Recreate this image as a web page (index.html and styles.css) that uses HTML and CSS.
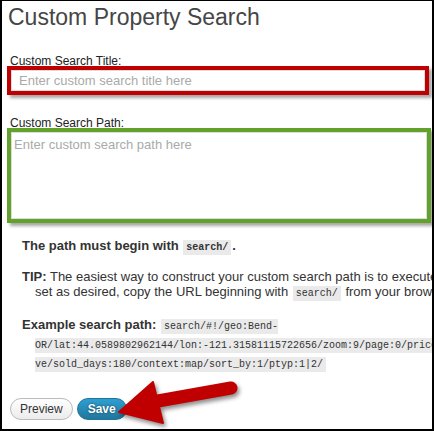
FILE: index.html
```html
<!DOCTYPE html>
<html>
<head>
<meta charset="utf-8">
<link rel="stylesheet" href="styles.css">
</head>
<body>
<div class="frame">
  <h2 class="title">Custom Property Search</h2>
  <label class="label label-title">Custom Search Title:</label>
  <div class="box box-red">
    <input class="field" type="text" placeholder="Enter custom search title here">
  </div>
  <label class="label label-path">Custom Search Path:</label>
  <div class="box box-green">
    <textarea class="area" placeholder="Enter custom search path here"></textarea>
  </div>
  <div class="notes">
    <p class="note note-first"><strong>The path must begin with <code>search/</code>.</strong></p>
    <p class="note note-tip"><strong>TIP:</strong> The easiest way to construct your custom search path is to execute a search with all options<br>set as desired, copy the URL beginning with <code>search/</code> from your browser and paste it here.</p>
    <p class="note note-example"><strong>Example search path:</strong> <code>search/#!/geo:Bend-<br>OR/lat:44.0589802962144/lon:-121.31581115722656/zoom:9/page:0/price_min:0/status:acti<br>ve/sold_days:180/context:map/sort_by:1/ptyp:1|2/</code></p>
  </div>
  <div class="actions">
    <button class="btn btn-preview" type="button">Preview</button>
    <button class="btn btn-save" type="button">Save</button>
  </div>
  <svg class="arrow" width="434" height="431" viewBox="0 0 434 431">
    <line x1="158" y1="401" x2="231" y2="388" stroke="#c00000" stroke-width="13" stroke-linecap="round"/>
    <polygon points="119,412 153,382 163,423" fill="#c00000" stroke="#c00000" stroke-width="2" stroke-linejoin="round"/>
  </svg>
</div>
</body>
</html>
```

FILE: styles.css
```css
html, body {
  margin: 0;
  padding: 0;
  background: #fff;
}

.frame {
  position: relative;
  box-sizing: border-box;
  width: 434px;
  height: 431px;
  border: 2px solid #000;
  border-top-width: 1px;
  padding: 3px 0 0 7px;
  overflow: hidden;
  font-family: "Liberation Sans", Arial, sans-serif;
  color: #333;
}

.title {
  margin: 0 0 0 -1px;
  font-size: 23px;
  font-weight: normal;
  line-height: 26px;
  color: #464646;
  white-space: nowrap;
}

.label {
  display: block;
  font-size: 12px;
  line-height: 12px;
  color: #222;
  margin-left: 1px;
  margin-bottom: -1px;
}

.label-title {
  margin-top: 25px;
}

.label-path {
  margin-top: 22px;
}

.box {
  position: relative;
  box-sizing: border-box;
  margin-left: -2px;
  border: 4px solid;
  box-shadow: 3px 3px 3px rgba(0, 0, 0, 0.35);
  background: #fff;
}

.box-red {
  width: 422px;
  height: 29px;
  border-color: #c00000;
}

.box-green {
  width: 424px;
  height: 95px;
  border-color: #62a22b;
}

.field,
.area {
  display: block;
  box-sizing: border-box;
  width: 100%;
  height: 100%;
  margin: 0;
  border: 1px solid #dcdcdc;
  background: #fff;
  font-family: "Liberation Sans", Arial, sans-serif;
  font-size: 13px;
  color: #333;
  outline: none;
}

.field {
  padding: 0 7px;
}

.area {
  padding: 4px 2px;
  line-height: 15px;
  resize: none;
}

.field::placeholder,
.area::placeholder {
  color: #aaa;
}

.notes {
  margin-left: 13px;
}

.note {
  margin: 0;
  font-size: 13px;
  white-space: nowrap;
  padding-left: 13px;
  text-indent: -13px;
  color: #333;
}

.note strong {
  color: #333;
}

.note-first {
  margin-top: 14px;
  line-height: 18px;
}

.note-tip {
  margin-top: 14px;
  line-height: 15px;
}

.note-example {
  margin-top: 16px;
  line-height: 19px;
}

code {
  font-family: "Liberation Mono", "DejaVu Sans Mono", monospace;
  font-size: 10px;
  line-height: 10px;
  background: #eaeaea;
  padding: 2px 3px;
  margin: 0 1px;
  color: #333;
}

.actions {
  display: flex;
  gap: 4px;
  margin-top: 26px;
  margin-left: 1px;
}

.btn {
  box-sizing: border-box;
  height: 22px;
  padding: 0 9px;
  border-radius: 11px;
  font-family: "Liberation Sans", Arial, sans-serif;
  font-size: 12px;
  line-height: 20px;
  cursor: pointer;
}

.btn-preview {
  border: 1px solid #bbb;
  background: linear-gradient(#fefefe, #ececec);
  color: #333;
}

.btn-save {
  border: 1px solid #21759b;
  background: linear-gradient(#2e9fd2, #21759b);
  color: #fff;
  font-weight: bold;
  text-shadow: 0 0 2px rgba(0, 0, 0, 0.6);
  padding: 0 10px;
}

.arrow {
  position: absolute;
  left: -2px;
  top: -1px;
  filter: drop-shadow(2px 3px 2px rgba(0, 0, 0, 0.45));
  pointer-events: none;
}
```
